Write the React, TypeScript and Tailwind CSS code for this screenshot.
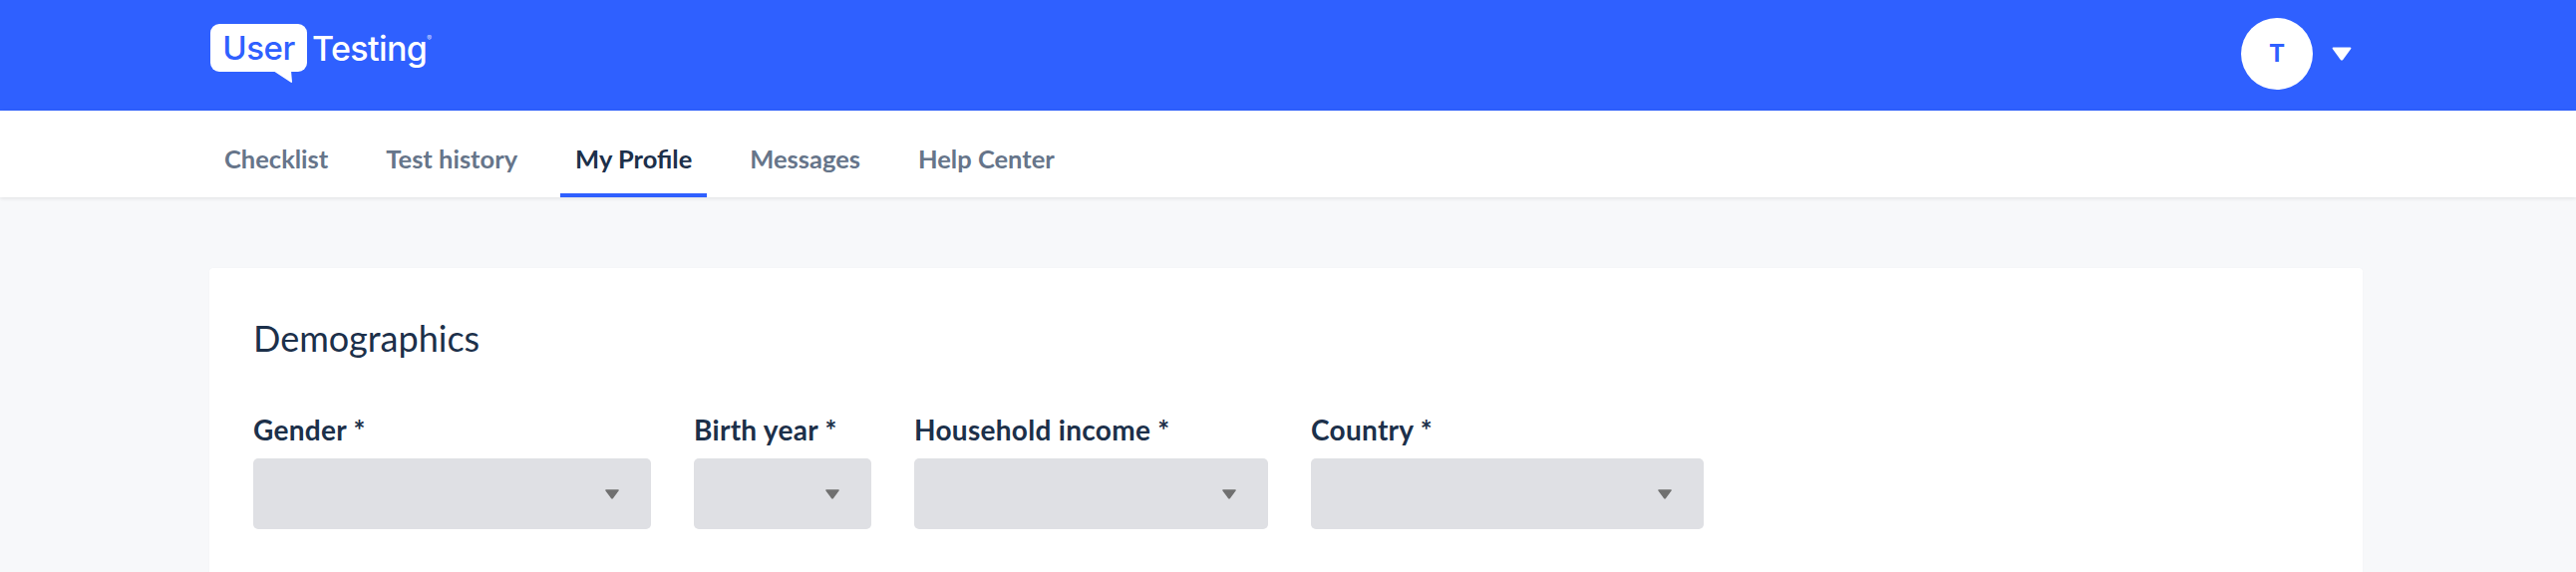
import React from 'react';

const tabs = [
  { label: 'Checklist', active: false },
  { label: 'Test history', active: false },
  { label: 'My Profile', active: true },
  { label: 'Messages', active: false },
  { label: 'Help Center', active: false },
];

const fields = [
  { label: 'Gender *', width: 'w-[399px]' },
  { label: 'Birth year *', width: 'w-[178px]' },
  { label: 'Household income *', width: 'w-[355px]' },
  { label: 'Country *', width: 'w-[394px]' },
];

function Logo() {
  return (
    <div className="flex items-start">
      <div className="relative flex h-[48px] w-[97px] items-center justify-center rounded-[9px] bg-white">
        <span className="text-[33px] font-medium leading-none tracking-[-0.5px] text-[#2f60ff] font-['Inter',sans-serif]">User</span>
        <svg className="absolute left-[63px] top-[47px]" width="22" height="13" viewBox="0 0 22 13">
          <path d="M0 0 H18 L19 11 Q19 12.500 17.500 11.500 Z" fill="#fff" />
        </svg>
      </div>
      <span className="ml-[5px] mt-[8px] text-[34px] font-medium leading-none tracking-[-0.6px] text-white font-['Inter',sans-serif]">Testing</span>
      <span className="mt-[11px] text-[7px] leading-none text-white/80 font-['Inter',sans-serif]">®</span>
    </div>
  );
}

function Caret({ className }: { className: string }) {
  return (
    <svg className={className} viewBox="0 0 20 14">
      <path d="M1.500 0.500 H18.500 Q20 0.500 19.200 2 L11.200 13 Q10 14 8.800 13 L0.800 2 Q0 0.500 1.500 0.500 Z" fill="currentColor" />
    </svg>
  );
}

export default function App() {
  return (
    <div className="h-[574px] overflow-hidden bg-[#f7f8fa] font-['Lato',sans-serif]">
      <header className="flex h-[111px] items-center justify-between bg-[#2f60ff] pl-[211px] pr-[225px]">
        <div className="-mt-[15px]">
          <Logo />
        </div>
        <div className="-mt-[4px] flex items-center gap-[19px]">
          <div className="flex h-[72px] w-[72px] items-center justify-center rounded-full bg-white text-[24px] font-bold text-[#2f60ff] font-['Inter',sans-serif]">
            T
          </div>
          <Caret className="h-[14px] w-[20px] text-white" />
        </div>
      </header>

      <nav className="flex h-[87px] gap-[28px] bg-white pl-[210px] shadow-[0_1px_4px_rgba(0,0,0,0.1)]">
        {tabs.map(tab => (
          <a
            key={tab.label}
            className={
              tab.active
                ? 'flex items-center border-b-[4px] border-[#2f60ff] px-[15px] pt-[14px] text-[25.5px] font-bold text-[#1c304a]'
                : 'flex items-center border-b-[4px] border-transparent px-[15px] pt-[14px] text-[25.5px] font-bold text-[#66758a]'
            }
          >
            {tab.label}
          </a>
        ))}
      </nav>

      <main className="pl-[210px] pr-[214px] pt-[71px]">
        <section className="h-[400px] rounded-[4px] bg-white px-[44px] pt-[48px] shadow-[0_0_2px_rgba(0,0,0,0.03)]">
          <h2 className="text-[36px] font-normal leading-[44px] text-[#1c304a]">Demographics</h2>
          <div className="mt-[54px] flex gap-[43px]">
            {fields.map(field => (
              <div key={field.label} className={field.width}>
                <label className="block whitespace-nowrap text-[28px] font-bold leading-[32px] tracking-[0.3px] text-[#1c304a]">{field.label}</label>
                <div className="mt-[13px] flex h-[71px] items-center justify-end rounded-[5px] bg-[#dfe0e4] pr-[31px]">
                  <Caret className="h-[10px] w-[16px] text-[#707070]" />
                </div>
              </div>
            ))}
          </div>
        </section>
      </main>
    </div>
  );
}
